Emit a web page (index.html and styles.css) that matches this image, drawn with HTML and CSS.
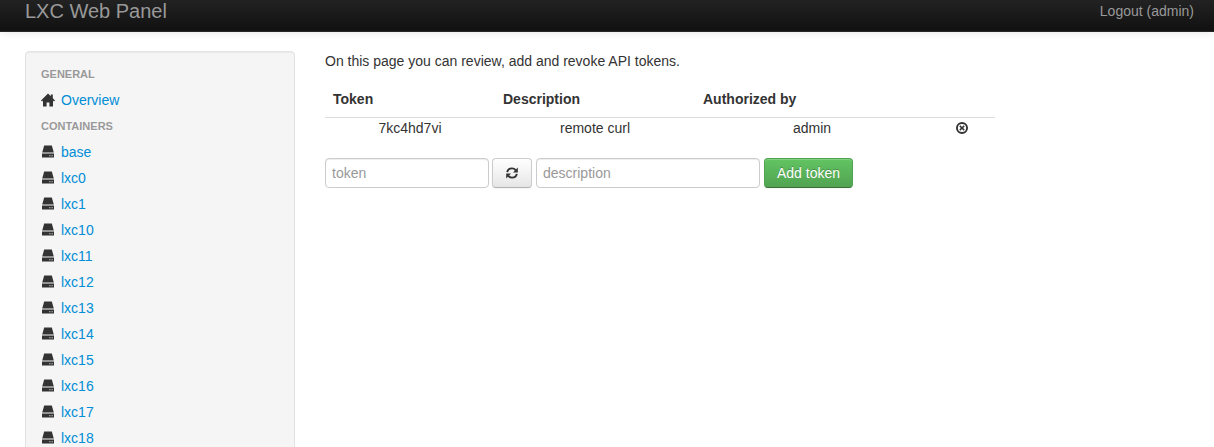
FILE: index.html
```html
<!DOCTYPE html>
<html lang="en">
<head>
    <title>LXC Web Panel</title>
    <link rel="stylesheet" href="styles.css">
</head>
<body>
    <svg class="sprites" width="0" height="0">
        <symbol id="i-home" viewBox="0 0 14 14">
            <path d="M7 0.4 0 7.4 1 8.4 2 7.4V13.6H5.6V9.4H8.4V13.6H12V7.4L13 8.4 14 7.4 11.8 5.2V1.4H9.8V3.2Z"/>
        </symbol>
        <symbol id="i-hdd" viewBox="0 0 14 14">
            <path d="M3.2 0.6H10.8L12.8 7.6H1.2Z"/>
            <path fill-rule="evenodd" d="M1 8.4H13V12.4H1ZM8.4 10.2V11.2H9.4V10.2ZM10.6 10.2V11.2H11.6V10.2Z"/>
        </symbol>
        <symbol id="i-refresh" viewBox="0 0 14 14">
            <path class="arc" d="M2.2 6.2C2.6 4 4.6 2.4 7 2.4 8.6 2.4 9.8 3.1 10.7 4.2"/>
            <path d="M12.8 1.6V6.6H8Z"/>
            <path class="arc" d="M11.8 7.8C11.4 10 9.4 11.6 7 11.6 5.4 11.6 4.2 10.9 3.3 9.8"/>
            <path d="M1.2 12.4V7.4H6Z"/>
        </symbol>
        <symbol id="i-remove" viewBox="0 0 14 14">
            <path fill-rule="evenodd" d="M7 1A6 6 0 1 0 7 13 6 6 0 1 0 7 1ZM7 2.9A4.1 4.1 0 1 1 7 11.1 4.1 4.1 0 1 1 7 2.9Z"/>
            <path d="M5.4 4.3 7 5.9 8.6 4.3 9.7 5.4 8.1 7 9.7 8.6 8.6 9.7 7 8.1 5.4 9.7 4.3 8.6 5.9 7 4.3 5.4Z"/>
        </symbol>
    </svg>

    <div class="navbar">
        <a class="brand" href="#">LXC Web Panel</a>
        <a class="logout" href="#">Logout (admin)</a>
    </div>

    <div class="page">
        <div class="sidebar">
            <div class="nav-header">General</div>
            <a class="nav-link" href="#"><svg class="icon"><use href="#i-home"/></svg>Overview</a>
            <div class="nav-header">Containers</div>
            <a class="nav-link" href="#"><svg class="icon"><use href="#i-hdd"/></svg>base</a>
            <a class="nav-link" href="#"><svg class="icon"><use href="#i-hdd"/></svg>lxc0</a>
            <a class="nav-link" href="#"><svg class="icon"><use href="#i-hdd"/></svg>lxc1</a>
            <a class="nav-link" href="#"><svg class="icon"><use href="#i-hdd"/></svg>lxc10</a>
            <a class="nav-link" href="#"><svg class="icon"><use href="#i-hdd"/></svg>lxc11</a>
            <a class="nav-link" href="#"><svg class="icon"><use href="#i-hdd"/></svg>lxc12</a>
            <a class="nav-link" href="#"><svg class="icon"><use href="#i-hdd"/></svg>lxc13</a>
            <a class="nav-link" href="#"><svg class="icon"><use href="#i-hdd"/></svg>lxc14</a>
            <a class="nav-link" href="#"><svg class="icon"><use href="#i-hdd"/></svg>lxc15</a>
            <a class="nav-link" href="#"><svg class="icon"><use href="#i-hdd"/></svg>lxc16</a>
            <a class="nav-link" href="#"><svg class="icon"><use href="#i-hdd"/></svg>lxc17</a>
            <a class="nav-link" href="#"><svg class="icon"><use href="#i-hdd"/></svg>lxc18</a>
        </div>

        <div class="content">
            <p class="intro">On this page you can review, add and revoke API tokens.</p>

            <table class="tokens">
                <thead>
                    <tr>
                        <th class="col-token">Token</th>
                        <th class="col-desc">Description</th>
                        <th class="col-auth">Authorized by</th>
                        <th class="col-action"></th>
                    </tr>
                </thead>
                <tbody>
                    <tr>
                        <td>7kc4hd7vi</td>
                        <td>remote curl</td>
                        <td>admin</td>
                        <td><a href="#"><svg class="icon-small"><use href="#i-remove"/></svg></a></td>
                    </tr>
                </tbody>
            </table>

            <form class="token-form">
                <input class="input-token" type="text" placeholder="token">
                <button class="btn" type="button"><svg class="icon-small"><use href="#i-refresh"/></svg></button>
                <input class="input-desc" type="text" placeholder="description">
                <button class="btn btn-success" type="submit">Add token</button>
            </form>
        </div>
    </div>
</body>
</html>
```

FILE: styles.css
```css
html, body {
    height: 100%;
    overflow: hidden;
}

body {
    font-family: "Liberation Sans", Arial, sans-serif;
    font-size: 14px;
    line-height: 20px;
    color: #333;
    background-color: #fff;
    margin: 0;
    padding: 0;
}

.sprites {
    position: absolute;
}

.navbar {
    display: flex;
    justify-content: space-between;
    height: 31px;
    padding: 0 20px 0 25px;
    background-image: linear-gradient(to bottom, #222222, #111111);
    border-bottom: 1px solid #252525;
    box-shadow: 0 1px 10px rgba(0, 0, 0, 0.1);
}

.navbar a {
    color: #999;
    text-decoration: none;
}

.brand {
    font-size: 20px;
    line-height: 22px;
}

.logout {
    line-height: 22px;
}

.page {
    display: flex;
    align-items: flex-start;
    padding: 19px 25px 0;
}

.sidebar {
    flex: none;
    box-sizing: border-box;
    width: 270px;
    padding: 9px 15px 19px;
    background-color: #f5f5f5;
    border: 1px solid #e3e3e3;
    border-radius: 4px;
    box-shadow: inset 0 1px 1px rgba(0, 0, 0, 0.05);
}

.nav-header {
    font-size: 11px;
    font-weight: bold;
    line-height: 26px;
    color: #999;
    text-transform: uppercase;
    text-shadow: 0 1px 0 rgba(255, 255, 255, 0.5);
}

.nav-link {
    display: flex;
    align-items: center;
    height: 26px;
    color: #008ed6;
    text-decoration: none;
}

.icon {
    flex: none;
    width: 14px;
    height: 14px;
    margin-right: 6px;
    fill: #333;
}

.icon-small {
    display: block;
    margin: 0 auto;
    width: 14px;
    height: 14px;
    fill: #333;
}

.arc {
    fill: none;
    stroke: #333;
    stroke-width: 1.9;
}

.content {
    flex: none;
    width: 670px;
    margin-left: 30px;
}

.intro {
    margin: 0;
    height: 30px;
}

.tokens {
    width: 670px;
    border-collapse: collapse;
    table-layout: fixed;
}

.tokens th {
    box-sizing: border-box;
    padding: 8px;
    text-align: left;
    font-weight: bold;
    border-bottom: 1px solid #ddd;
}

.tokens td {
    padding: 0 8px;
    height: 20px;
    text-align: center;
}

.col-token { width: 170px; }
.col-desc { width: 200px; }
.col-auth { width: 234px; }
.col-action { width: 66px; }

.token-form {
    display: flex;
    gap: 3px;
    margin-top: 20px;
}

input {
    box-sizing: border-box;
    height: 30px;
    padding: 4px 6px;
    font-family: inherit;
    font-size: 14px;
    color: #555;
    border: 1px solid #ccc;
    border-radius: 4px;
    box-shadow: inset 0 1px 1px rgba(0, 0, 0, 0.075);
}

input::placeholder {
    color: #999;
}

.input-token { width: 164px; }
.input-desc { width: 224px; margin-left: 1px; }

.btn {
    box-sizing: border-box;
    height: 30px;
    width: 40px;
    padding: 0;
    font-family: inherit;
    font-size: 14px;
    color: #333;
    background-image: linear-gradient(to bottom, #ffffff, #e6e6e6);
    border: 1px solid #ccc;
    border-bottom-color: #b3b3b3;
    border-radius: 4px;
    box-shadow: inset 0 1px 0 rgba(255, 255, 255, 0.2), 0 1px 2px rgba(0, 0, 0, 0.05);
}

.btn-success {
    width: 89px;
    margin-left: 1px;
    color: #fff;
    text-shadow: 0 -1px 0 rgba(0, 0, 0, 0.25);
    background-image: linear-gradient(to bottom, #62c462, #51a351);
    border-color: #51a351 #51a351 #387038;
}
```
